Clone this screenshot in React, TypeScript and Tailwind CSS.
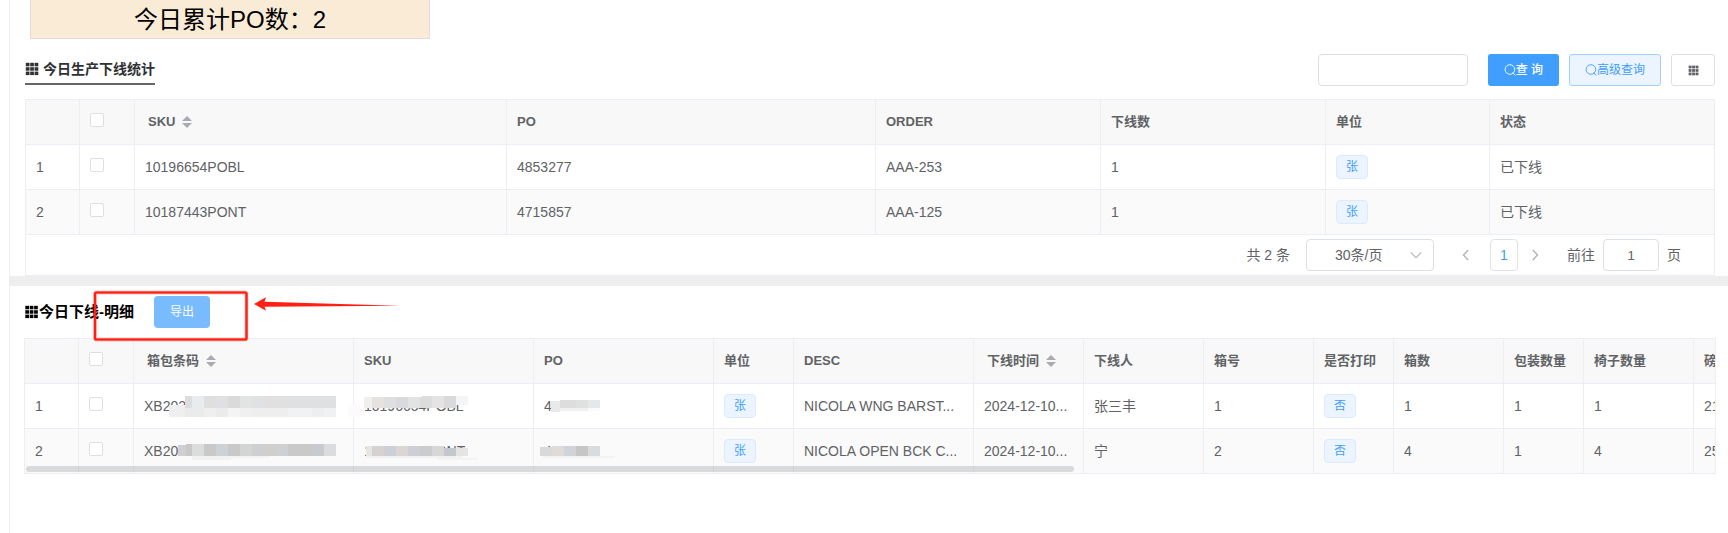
import { useState, type ReactNode } from 'react';

interface Column {
    key: string;
    label: string;
    width: number;
    sortable?: boolean;
    tag?: boolean;
}

type Row = Record<string, string>;

// Summary of today's finished production
const SUMMARY_COLUMNS: Column[] = [
    { key: 'sku', label: 'SKU', width: 372, sortable: true },
    { key: 'po', label: 'PO', width: 369 },
    { key: 'order', label: 'ORDER', width: 225 },
    { key: 'count', label: '下线数', width: 225 },
    { key: 'unit', label: '单位', width: 164, tag: true },
    { key: 'status', label: '状态', width: 225 },
];

const SUMMARY_ROWS: Row[] = [
    { sku: '10196654POBL', po: '4853277', order: 'AAA-253', count: '1', unit: '张', status: '已下线' },
    { sku: '10187443PONT', po: '4715857', order: 'AAA-125', count: '1', unit: '张', status: '已下线' },
];

const DETAIL_COLUMNS: Column[] = [
    { key: 'barcode', label: '箱包条码', width: 220, sortable: true },
    { key: 'sku', label: 'SKU', width: 180 },
    { key: 'po', label: 'PO', width: 180 },
    { key: 'unit', label: '单位', width: 80, tag: true },
    { key: 'desc', label: 'DESC', width: 180 },
    { key: 'time', label: '下线时间', width: 110, sortable: true },
    { key: 'worker', label: '下线人', width: 120 },
    { key: 'boxNo', label: '箱号', width: 110 },
    { key: 'printed', label: '是否打印', width: 80, tag: true },
    { key: 'boxes', label: '箱数', width: 110 },
    { key: 'packQty', label: '包装数量', width: 80 },
    { key: 'chairQty', label: '椅子数量', width: 110 },
    { key: 'weight', label: '磅', width: 110 },
];

const DETAIL_ROWS: Row[] = [
    {
        barcode: 'XB202', sku: '10196654POBL', po: '4', unit: '张', desc: 'NICOLA WNG BARST...',
        time: '2024-12-10...', worker: '张三丰', boxNo: '1', printed: '否', boxes: '1',
        packQty: '1', chairQty: '1', weight: '21',
    },
    {
        barcode: 'XB20', sku: '10187443PONT', po: '4715', unit: '张', desc: 'NICOLA OPEN BCK C...',
        time: '2024-12-10...', worker: '宁', boxNo: '2', printed: '否', boxes: '4',
        packQty: '1', chairQty: '4', weight: '25',
    },
];

// Mosaic strips over private values: x, y, width, height, colour
const MOSAIC: [number, number, number, number, string][] = [
    // barcode, first row
    [144, 66, 16, 12, '#efefef'],
    [160, 57, 7, 12, '#dddcdf'], [167, 57, 12, 12, '#e8ecee'], [179, 57, 12, 12, '#dfdfe0'],
    [191, 57, 12, 12, '#e0e0e2'], [203, 57, 12, 12, '#dadadb'], [215, 57, 12, 12, '#e2e3e3'],
    [227, 57, 12, 12, '#e0e1e2'], [239, 57, 12, 12, '#e1dfe0'], [251, 57, 12, 12, '#e0e0e1'],
    [263, 57, 48, 12, '#dfe0e1'],
    [160, 69, 19, 9, '#ebebec'], [179, 69, 12, 9, '#efefef'], [191, 69, 12, 9, '#ebebeb'],
    [203, 69, 12, 9, '#f4f4f4'], [215, 69, 12, 9, '#f0f0f0'], [227, 69, 36, 9, '#eeeeef'],
    [263, 69, 24, 9, '#f1f2f3'], [287, 69, 12, 9, '#edeeef'], [299, 69, 12, 9, '#f0f1f3'],
    // barcode, second row
    [153, 106, 8, 11, '#cfced0'], [161, 105, 6, 12, '#c8c7ca'], [167, 105, 12, 12, '#dbdddc'],
    [179, 105, 12, 12, '#c9c9ca'], [191, 105, 12, 12, '#cfd2d5'], [203, 105, 12, 12, '#c9c9ca'],
    [215, 105, 12, 12, '#d3d4d4'], [227, 105, 12, 12, '#cecfd1'], [239, 105, 12, 12, '#d1cfcd'],
    [251, 105, 12, 12, '#cfd0d2'], [263, 105, 24, 12, '#c9c9ca'], [287, 105, 12, 12, '#c9cacd'],
    [299, 105, 12, 12, '#dbdcde'],
    [167, 117, 39, 4, '#f2f2f3'], [206, 117, 38, 2, '#f3f3f3'],
    // sku, first row
    [323, 66, 13, 12, '#fbfbfb'], [336, 69, 4, 8, '#fbfbfb'],
    [339, 58, 8, 11, '#efefef'], [347, 58, 12, 11, '#e5e2e0'], [359, 58, 12, 11, '#dedfe1'],
    [371, 58, 12, 11, '#d8dadc'], [383, 58, 12, 11, '#e2e4e3'], [395, 58, 2, 11, '#dcdcdc'],
    [397, 57, 10, 12, '#dcdcdc'], [407, 57, 12, 12, '#e4e4e4'], [419, 57, 12, 12, '#dadadc'],
    [431, 57, 12, 9, '#f5f5f6'],
    // sku, second row
    [341, 107, 6, 10, '#e6e6e6'], [347, 107, 12, 10, '#d6d2cf'], [359, 107, 12, 10, '#cccfd5'],
    [371, 107, 12, 10, '#dad6d3'], [383, 107, 12, 10, '#cecfd4'], [395, 107, 12, 10, '#cbccce'],
    [407, 107, 12, 10, '#d8d7d7'], [419, 109, 12, 8, '#c6c7cc'], [431, 109, 12, 8, '#e4e4e4'],
    [341, 117, 96, 2, '#f1f1f1'], [412, 119, 40, 2, '#f3f3f3'],
    // po, first row
    [526, 62, 9, 11, '#e9e9e9'], [535, 61, 16, 8, '#dddddd'], [551, 61, 12, 8, '#dfe0e0'],
    [563, 61, 12, 8, '#e6e7e8'],
    [535, 69, 28, 3, '#f0f0f0'], [563, 69, 12, 3, '#fafafa'],
    // po, second row
    [515, 108, 12, 9, '#d9d9da'], [527, 107, 12, 10, '#dfdbd9'], [539, 107, 12, 10, '#d0d4d8'],
    [551, 107, 12, 10, '#c6c6c6'], [563, 107, 12, 10, '#dadbdc'],
    [518, 117, 72, 2, '#f3f3f3'],
];

function GridIcon({ className }: { className: string }) {
    return (
        <svg viewBox="0 0 14 14" className={className} fill="currentColor" aria-hidden="true">
            {[0.8, 5.2, 9.6].map((y) =>
                [0.8, 5.2, 9.6].map((x) => <rect key={`${x}-${y}`} x={x} y={y} width="3.7" height="3.5" />)
            )}
        </svg>
    );
}

function SearchIcon() {
    return (
        <svg viewBox="0 0 12 12" className="w-3 h-3" fill="none" stroke="currentColor" strokeWidth="0.9" aria-hidden="true">
            <circle cx="5.9" cy="5.5" r="4.8" />
            <path d="M8.6 8.6 L11.4 11.6" />
        </svg>
    );
}

function Chevron({ d, className }: { d: string; className: string }) {
    return (
        <svg viewBox="0 0 12 12" className={className} fill="none" stroke="currentColor" strokeWidth="1.1" aria-hidden="true">
            <path d={d} />
        </svg>
    );
}

function SortIcon() {
    return (
        <svg viewBox="0 0 10 12" className="w-[10px] h-3 ml-[7px]" fill="#a8abb2" aria-hidden="true">
            <path d="M5 0 L10 5 H0 Z" />
            <path d="M0 7 H10 L5 12 Z" />
        </svg>
    );
}

function Checkbox({ label }: { label: string }) {
    return (
        <input
            type="checkbox"
            aria-label={label}
            className="block w-[14px] h-[14px] mb-[5px] appearance-none rounded-xs border border-[#dcdfe6] bg-white checked:bg-[#409eff] checked:border-[#409eff]"
        />
    );
}

function Tag({ children }: { children: ReactNode }) {
    return (
        <span className="inline-flex items-center justify-center w-8 h-6 align-middle rounded border border-[#d9ecff] bg-[#ecf4ff] text-xs text-[#409eff]">
            {children}
        </span>
    );
}

interface DataTableProps {
    label: string;
    columns: Column[];
    rows: Row[];
    className: string;
}

function DataTable({ label, columns, rows, className }: DataTableProps) {
    const cell = 'h-[45px] p-0 px-[10px] border-r border-b border-[#ebeef5] text-left whitespace-nowrap';

    return (
        <table aria-label={label} className={`table-fixed border-separate border-spacing-0 text-sm text-[#606266] ${className}`}>
            <colgroup>
                <col style={{ width: 54 }} />
                <col style={{ width: 55 }} />
                {columns.map((col) => <col key={col.key} style={{ width: col.width }} />)}
            </colgroup>
            <thead className="bg-[#f8f8f8] text-[13px]">
                <tr>
                    <th className={cell} />
                    <th className={cell}><Checkbox label="全选" /></th>
                    {columns.map((col) => (
                        <th key={col.key} className={cell}>
                            {col.sortable ? (
                                <span className="flex items-center pl-[3px]">{col.label}<SortIcon /></span>
                            ) : col.label}
                        </th>
                    ))}
                </tr>
            </thead>
            <tbody>
                {rows.map((row, i) => (
                    <tr key={i} className="even:bg-[#fafafa]">
                        <td className={cell}>{i + 1}</td>
                        <td className={cell}><Checkbox label={`选择 ${i + 1}`} /></td>
                        {columns.map((col) => (
                            <td key={col.key} className={cell}>
                                {col.tag ? <Tag>{row[col.key]}</Tag> : row[col.key]}
                            </td>
                        ))}
                    </tr>
                ))}
            </tbody>
        </table>
    );
}

function Pagination() {
    const [page, setPage] = useState('1');

    return (
        <div className="flex items-center justify-end h-10 pr-[33px] text-sm text-[#606266]">
            <span className="mr-4">共 2 条</span>
            <div className="relative">
                <select aria-label="每页条数" className="block w-32 h-8 pl-7 appearance-none rounded border border-[#dcdfe6] bg-white">
                    <option>30条/页</option>
                </select>
                <Chevron d="M0.8 3.5 L6 8.7 L11.2 3.5" className="absolute right-3 top-[10px] w-3 h-3 text-[#b4b8c0] pointer-events-none" />
            </div>
            <button type="button" aria-label="上一页" className="flex items-center justify-center w-7 h-8 ml-[18px] mr-[10px] text-[#a8abb2]">
                <Chevron d="M8.2 1 L3.4 6 L8.2 11" className="w-3 h-3" />
            </button>
            <button type="button" className="w-7 h-8 rounded border border-[#e0e3ea] text-[#409eff]">1</button>
            <button type="button" aria-label="下一页" className="flex items-center justify-center w-7 h-8 ml-[3px] mr-[18px] text-[#a8abb2]">
                <Chevron d="M3.8 1 L8.6 6 L3.8 11" className="w-3 h-3" />
            </button>
            <label className="flex items-center gap-2">
                前往
                <input
                    value={page}
                    onChange={(e) => setPage(e.target.value)}
                    className="w-14 h-8 rounded border border-[#dcdfe6] text-center text-[13px]"
                />
                页
            </label>
        </div>
    );
}

export default function App() {
    return (
        <div className="min-h-screen pl-[9px] bg-white font-['Liberation_Sans','Noto_Sans_CJK_SC',sans-serif] text-black">
            <main className="min-h-screen border-l border-[#eee]">
                <section className="pl-[15px] pr-[13px]">
                    {/* Banner with today's PO total */}
                    <div className="flex items-center justify-center w-[400px] max-w-full h-[39px] ml-[5px] pt-[2px] border border-t-0 border-[#e8d8dc] bg-[#faebd7] text-2xl">
                        今日累计PO数：2
                    </div>

                    <div className="flex items-start justify-between pt-[15px] pb-[13px]">
                        <h2 className="flex items-center gap-1 h-[31px] border-b-2 border-[#666] text-sm font-bold text-[#303133]">
                            <GridIcon className="w-[14px] h-[14px]" />
                            今日生产下线统计
                        </h2>
                        <div className="flex items-center gap-[10px] text-xs">
                            <input aria-label="关键字" className="w-[150px] h-8 mr-[10px] px-3 rounded border border-[#dcdfe6]" />
                            <button type="button" className="flex items-center h-8 px-4 rounded-[3px] bg-[#409eff] text-white font-medium">
                                <SearchIcon />
                                查 询
                            </button>
                            <button type="button" className="flex items-center h-8 px-[15px] rounded-[3px] border border-[#a0cfff] bg-[#ecf4ff] text-[#409eff]">
                                <SearchIcon />
                                高级查询
                            </button>
                            <button type="button" aria-label="列设置" className="flex items-center justify-center w-11 h-8 rounded-[3px] border border-[#dcdfe6] text-[#606266]">
                                <GridIcon className="w-[11px] h-[11px]" />
                            </button>
                        </div>
                    </div>

                    <div className="border-l border-t border-[#ebeef5]">
                        <DataTable label="今日生产下线统计" columns={SUMMARY_COLUMNS} rows={SUMMARY_ROWS} className="w-full" />
                        <div className="border-r border-b border-[#ebeef5]">
                            <Pagination />
                        </div>
                    </div>
                </section>

                <div className="h-[10px] bg-[#eee]" />

                <section className="relative pl-[14px] pr-3">
                    <div className="flex items-center gap-5 py-[10px]">
                        <h2 className="flex items-center text-[15px] font-bold">
                            <GridIcon className="w-[15px] h-[14px]" />
                            今日下线-明细
                        </h2>
                        <button type="button" className="h-8 px-4 rounded bg-[#79bbff] text-xs text-white">导出</button>
                    </div>

                    <div className="relative border-x border-t border-[#ebeef5]">
                        <div className="overflow-x-auto [scrollbar-width:none]">
                            <div className="relative w-max">
                                <DataTable label="今日下线-明细" columns={DETAIL_COLUMNS} rows={DETAIL_ROWS} className="w-[1779px]" />
                                <svg width="640" height="134" className="absolute left-0 top-0 pointer-events-none" aria-hidden="true">
                                    {MOSAIC.map(([x, y, w, h, fill]) => (
                                        <rect key={`${x}-${y}`} x={x} y={y} width={w} height={h} fill={fill} />
                                    ))}
                                </svg>
                            </div>
                        </div>
                        {/* Scroll thumb */}
                        <div className="absolute left-px bottom-[2px] w-[62%] h-[6px] rounded-full bg-[#909399]/30" />
                    </div>

                    {/* Red marker box and arrow pointing at the export button */}
                    <svg width="400" height="60" className="absolute left-0 top-0 pointer-events-none" aria-hidden="true">
                        <rect x="85" y="6.5" width="151.5" height="47" rx="1.5" fill="none" stroke="#ff2015" strokeOpacity="0.45" strokeWidth="3.4" />
                        <rect x="85" y="6.5" width="151.5" height="47" rx="1.5" fill="none" stroke="#ff2015" strokeWidth="2.2" />
                        <path d="M244 18 L256 11.3 L254.5 15.8 L390 19.7 L254.5 20.7 L256 24.7 Z" fill="#ff2015" />
                    </svg>
                </section>
            </main>
        </div>
    );
}
